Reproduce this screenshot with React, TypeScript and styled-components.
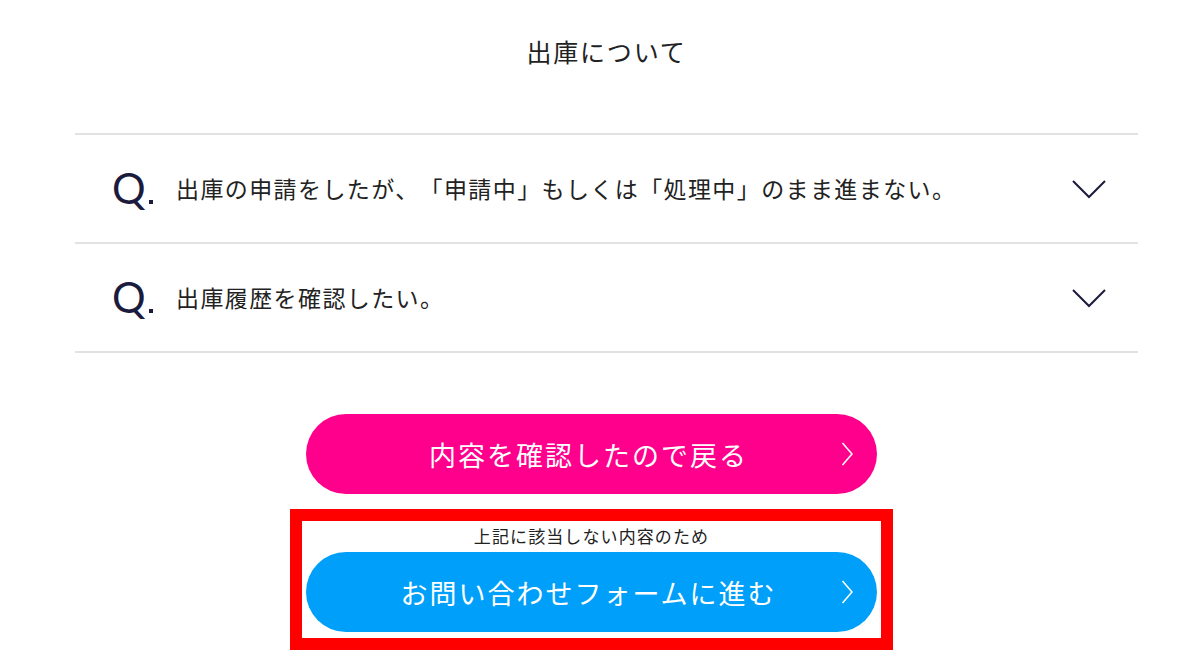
import React from "react";
import styled, { createGlobalStyle } from "styled-components";

const Global = createGlobalStyle`
  html, body { margin: 0; padding: 0; background: #fff; }
  body {
    font-family: "Noto Sans CJK JP", "Noto Sans", sans-serif;
    color: #222;
    text-spacing-trim: space-all;
  }
`;

const Page = styled.div`
  padding: 0 62px 0 75px;
  width: 1200px;
  box-sizing: border-box;
`;

const Title = styled.h2`
  margin: 0;
  height: 133px;
  display: flex;
  align-items: flex-start;
  justify-content: center;
  padding-top: 33px;
  box-sizing: border-box;
  font-size: 25px;
  font-weight: 400;
  letter-spacing: 1.8px;
  line-height: 36px;
  color: #222;
`;

const List = styled.div`
  border-top: 2px solid #e2e2e2;
`;

const Row = styled.div`
  height: 109px;
  box-sizing: border-box;
  border-bottom: 2px solid #e2e2e2;
  display: flex;
  align-items: center;
  padding: 0 32px 0 37px;
`;

const QMark = styled.span`
  font-family: "Lato", "Open Sans", sans-serif;
  font-size: 42px;
  line-height: 1;
  color: #1b1b3d;
  width: 64px;
  display: flex;
  align-items: baseline;
  position: relative;
  top: -1px;
`;

const QDot = styled.span`
  width: 4px;
  height: 4px;
  background: #1b1b3d;
  margin-left: 3px;
`;

const QText = styled.span`
  flex: 1;
  font-size: 23px;
  letter-spacing: 1.4px;
  color: #222;
  line-height: 30px;
  position: relative;
  top: -1px;
  text-spacing-trim: space-all;
`;

const ButtonArea = styled.div`
  width: 603px;
  margin: 61px 0 0 215px;
  display: flex;
  flex-direction: column;
  align-items: center;
`;

const PillButton = styled.a<{ $color: string }>`
  width: 571px;
  height: 80px;
  border-radius: 40px;
  background: ${(p) => p.$color};
  color: #fff;
  display: flex;
  align-items: center;
  justify-content: center;
  position: relative;
  font-size: 27px;
  letter-spacing: 2px;
  padding-right: 6px;
  text-decoration: none;
  box-sizing: border-box;
`;

const Arrow = styled.svg`
  position: absolute;
  right: 24px;
  top: 50%;
  margin-top: -12px;
`;

const Highlight = styled.div`
  margin-top: 15px;
  border: 12px solid #ff0000;
  padding: 4px 4px 6px;
  width: 603px;
  box-sizing: border-box;
  display: flex;
  flex-direction: column;
  align-items: center;
`;

const Note = styled.p`
  margin: 0 0 5px;
  font-size: 17px;
  letter-spacing: 1.1px;
  line-height: 22px;
  color: #222;
`;

const Chevron = () => (
  <svg width="34" height="20" viewBox="0 0 34 20">
    <path d="M1 2 L17 18 L33 2" fill="none" stroke="#1b1b3d" strokeWidth="2" />
  </svg>
);

const ButtonArrow = () => (
  <Arrow width="12" height="24" viewBox="0 0 12 24">
    <path d="M1.5 1 L11 12 L1.5 23" fill="none" stroke="#fff" strokeWidth="1.6" />
  </Arrow>
);

const questions = [
  "出庫の申請をしたが、「申請中」もしくは「処理中」のまま進まない。",
  "出庫履歴を確認したい。",
];

export default function App() {
  return (
    <>
      <Global />
      <Page>
        <Title>出庫について</Title>
        <List>
          {questions.map((q) => (
            <Row key={q}>
              <QMark>
                Q<QDot />
              </QMark>
              <QText>{q}</QText>
              <Chevron />
            </Row>
          ))}
        </List>
        <ButtonArea>
          <PillButton $color="#ff008c">
            内容を確認したので戻る
            <ButtonArrow />
          </PillButton>
          <Highlight>
            <Note>上記に該当しない内容のため</Note>
            <PillButton $color="#00a0fa">
              お問い合わせフォームに進む
              <ButtonArrow />
            </PillButton>
          </Highlight>
        </ButtonArea>
      </Page>
    </>
  );
}
